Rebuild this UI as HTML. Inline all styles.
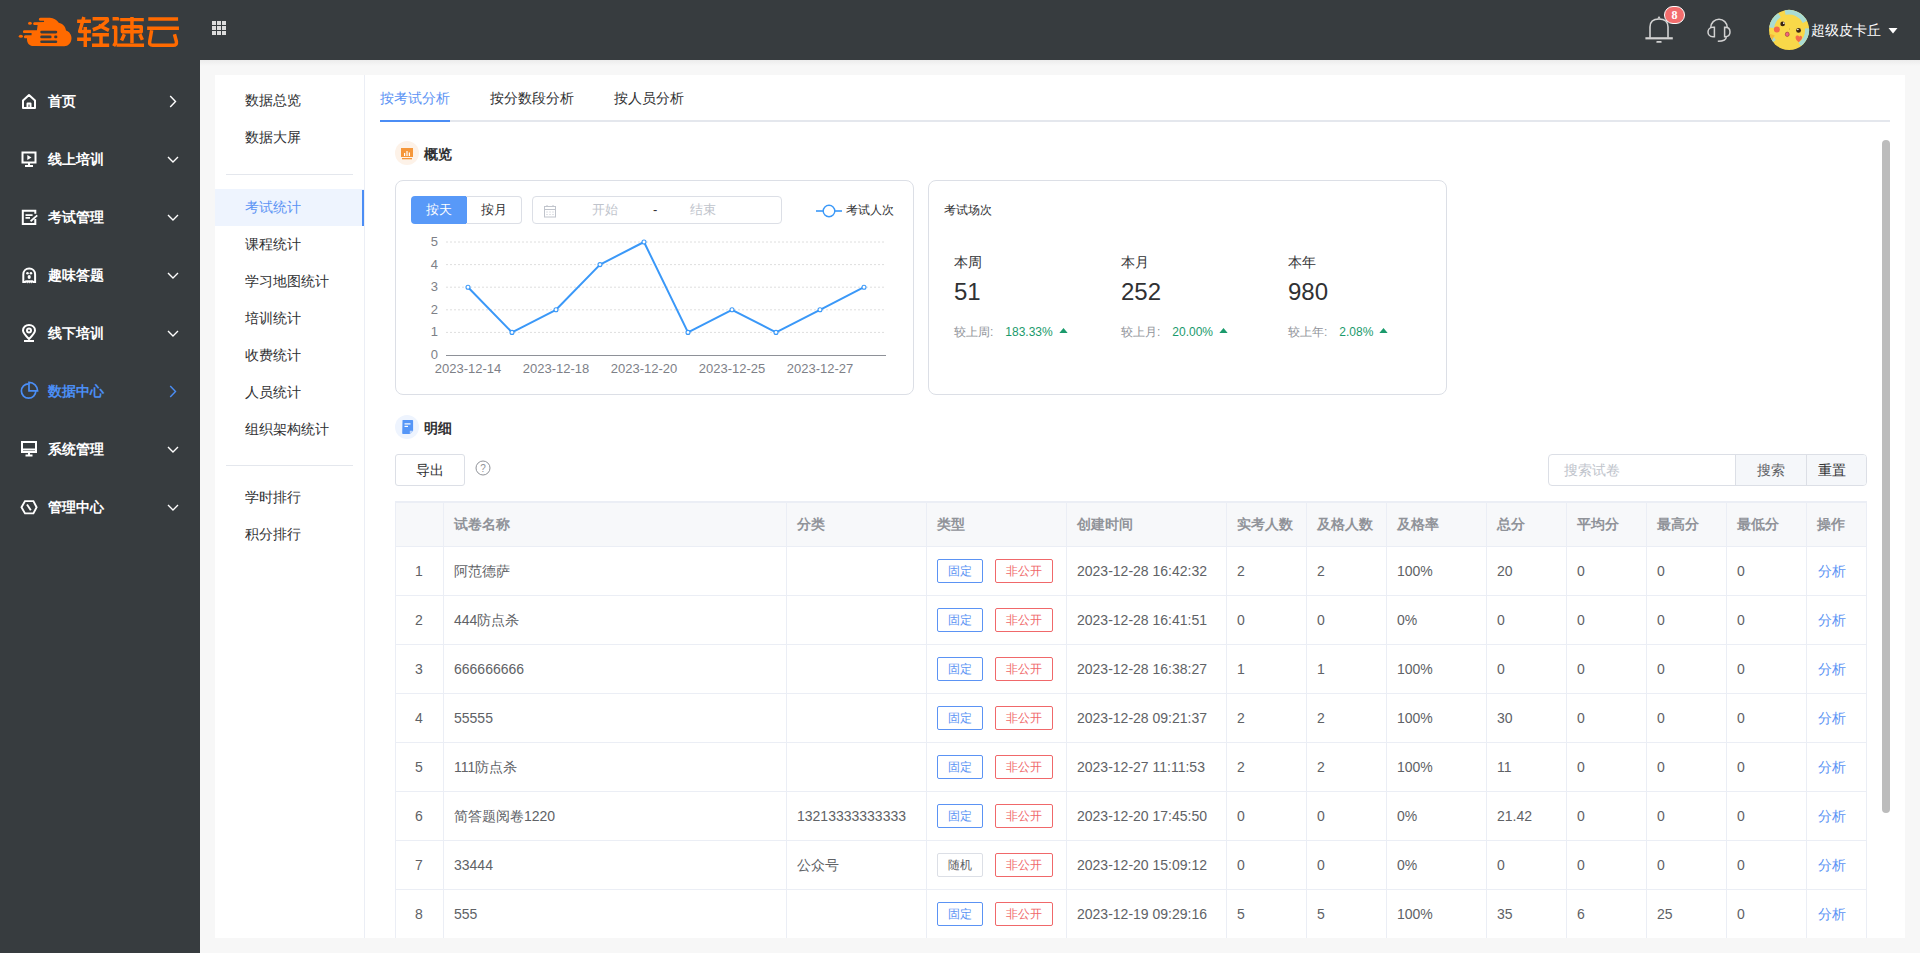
<!DOCTYPE html>
<html><head><meta charset="utf-8">
<style>
*{box-sizing:border-box;margin:0;padding:0}
html,body{width:1920px;height:953px;overflow:hidden;background:#f7f7f7;font-family:"Liberation Sans",sans-serif;font-size:14px;color:#303133}
.a{position:absolute;white-space:nowrap}
#hdr{position:absolute;left:0;top:0;width:1920px;height:60px;background:#373c3f}
#side{position:absolute;left:0;top:60px;width:200px;height:893px;background:#373c3f}
#shadow{position:absolute;left:200px;top:60px;width:1720px;height:6px;background:linear-gradient(#ececec,#f7f7f7)}
.mi{position:absolute;left:0;width:200px;height:30px;color:#fff;font-weight:bold}
.mi .tx{position:absolute;left:48px;top:8px;line-height:14px;font-size:14px}
.mi svg{position:absolute}
#card{position:absolute;left:215px;top:75px;width:1690px;height:863px;background:#fff;overflow:hidden}
#subnav{position:absolute;left:0;top:0;width:150px;height:863px;border-right:1px solid #ebeef5}
.sn{position:absolute;left:0;width:149px;height:37px;line-height:37px;padding-left:30px;color:#303133;font-size:14px}
.sn.act{background:#eef4fe;color:#5b93f4}
.sn.act:after{content:"";position:absolute;right:-2px;top:1px;width:3px;height:36px;background:#4b8df5}
.hr{position:absolute;left:11px;width:127px;height:1px;background:#e6e9ef}

</style></head><body>
<div id="hdr">
 <svg class="a" style="left:14px;top:14px" width="63" height="36" viewBox="0 0 1668 953">
 <path fill="#ff6a00" d="M520 850 C400 850 335 760 345 640 L300 640 C250 640 250 560 300 560 L465 560 L465 505 L275 505 C225 505 225 430 275 430 L608 430 L625 292 L545 292 C495 292 495 218 545 218 L795 212 L795 178 L700 178 C645 178 645 98 700 98 L950 98 C1050 98 1130 160 1185 230 C1290 250 1365 330 1378 440 C1470 470 1528 560 1522 655 C1515 770 1435 852 1330 852 Z"/>
 <ellipse cx="422" cy="246" rx="50" ry="40" fill="#ff6a00"/>
 <ellipse cx="182" cy="592" rx="55" ry="40" fill="#ff6a00"/>
 <g fill="#373c3f">
  <rect x="695" y="445" width="450" height="68" rx="34"/>
  <rect x="695" y="572" width="300" height="68" rx="34"/>
  <rect x="1062" y="572" width="86" height="68" rx="34"/>
  <rect x="695" y="700" width="450" height="70" rx="35"/>
 </g>
</svg>
 <svg class="a" style="left:76px;top:14px" width="108" height="36" viewBox="0 0 1920 640" fill="none" stroke="#ff6a00" stroke-width="62" stroke-linejoin="round">
 <path d="M20 130 L265 130 M140 55 L65 310 L265 310 M165 230 L165 585 M20 450 L265 450"/>
 <path d="M295 85 L555 85 L560 120 L430 230 L300 280 M400 200 L585 290 M290 370 L585 370 M445 370 L445 550 M285 555 L590 555"/>
 <path d="M650 85 L740 85 L740 115 M645 235 L705 235 L705 510 L670 570 M720 550 L1210 555"/>
 <path d="M785 100 L1205 100 M995 55 L995 520 M825 225 L1160 225 L1160 315 L825 315 Z M860 360 L810 470 M1135 360 L1180 460"/>
 <path d="M1285 90 L1815 90 M1265 255 L1830 255 M1345 290 L1310 490 Q1300 555 1360 555 L1730 555 Q1795 555 1785 490 L1750 360"/>
</svg>
 <svg class="a" style="left:212px;top:21px" width="14" height="14" viewBox="0 0 14 14"><g fill="#dcdcdc">
  <rect x="0" y="0" width="4" height="4"/><rect x="5" y="0" width="4" height="4"/><rect x="10" y="0" width="4" height="4"/>
  <rect x="0" y="5" width="4" height="4"/><rect x="5" y="5" width="4" height="4"/><rect x="10" y="5" width="4" height="4"/>
  <rect x="0" y="10" width="4" height="4"/><rect x="5" y="10" width="4" height="4"/><rect x="10" y="10" width="4" height="4"/>
 </g></svg>
 <!-- bell -->
 <svg class="a" style="left:1644px;top:14px" width="30" height="30" viewBox="0 0 30 30" fill="none" stroke="#d2d2d2" stroke-width="1.6">
  <path d="M6 23.8 L6 13 C6 7.5 9.5 5 15 5 C20.5 5 24 7.5 24 13 L24 23.8"/>
  <path d="M1.4 24.3 L28.8 24.3" stroke-width="2.2"/>
  <path d="M13.3 4.6 L15 2 L16.7 4.6Z" fill="#d2d2d2" stroke="none"/>
  <path d="M13.2 27.9 L16.8 27.9" stroke-width="1.8" stroke-linecap="round"/>
 </svg>
 <div class="a" style="left:1664px;top:6px;width:21px;height:18px;border-radius:9px;background:#f26d6d;border:1px solid #fff;color:#fff;font-size:12px;line-height:16px;text-align:center;font-family:'Liberation Serif',serif;font-weight:bold">8</div>
 <!-- headset -->
 <svg class="a" style="left:1705px;top:14px" width="28" height="30" viewBox="0 0 28 30" fill="none" stroke="#d2d2d2" stroke-width="1.5">
  <path d="M5.8 14 L5.8 13.4 A8.2 8.2 0 0 1 22.2 13.4 L22.2 14"/>
  <path d="M9.4 13.3 L9.4 22.7 L8 22.7 C4.3 22.7 3 20 3 18 C3 16 4.3 13.3 8 13.3 Z"/>
  <path d="M19.6 13.3 L19.6 22.7 L20.2 22.7 C23.8 22.7 25 20 25 18 C25 16 23.8 13.3 20.2 13.3 Z"/>
  <path d="M21.3 22.7 C21.3 25.5 19.5 27.2 12.8 27.2"/>
 </svg>
 <!-- avatar -->
 <svg class="a" style="left:1766px;top:8px" width="46" height="44" viewBox="0 0 996 953">
  <defs><clipPath id="avc"><circle cx="500" cy="475" r="435"/></clipPath></defs>
  <g clip-path="url(#avc)">
   <rect width="996" height="953" fill="#f9d849"/>
   <path d="M412 95 A390 390 0 0 1 847 298" stroke="#a9dcd3" stroke-width="110" fill="none"/>
   <path d="M118 428 A385 385 0 0 1 290 152" stroke="#a9dcd3" stroke-width="115" fill="none"/>
   <path d="M891 441 A392 392 0 0 1 730 792" stroke="#a9dcd3" stroke-width="95" fill="none"/>
   <path d="M181 716 A400 400 0 0 1 129 625" stroke="#a9dcd3" stroke-width="80" fill="none"/>
   <path d="M65 560 L190 590 L130 700 Z" fill="#f6b93a"/>
   <circle cx="360" cy="345" r="50" fill="#3a2412"/><circle cx="385" cy="328" r="18" fill="#fff"/>
   <circle cx="705" cy="485" r="52" fill="#3a2412"/><circle cx="690" cy="465" r="18" fill="#fff"/>
   <circle cx="235" cy="465" r="65" fill="#f36b4b"/>
   <path d="M640 640 C640 580 710 590 720 620 C740 580 790 600 780 650 C770 700 720 720 710 740 C680 710 640 690 640 640Z" fill="#f36b4b"/>
   <ellipse cx="460" cy="570" rx="42" ry="48" fill="#f26480" stroke="#8a3a2a" stroke-width="12"/>
   <circle cx="510" cy="455" r="10" fill="#9a7a30"/>
  </g>
 </svg>
 <div class="a" style="left:1811px;top:20px;font-size:14px;line-height:20px;color:#fff">超级皮卡丘</div>
 <svg class="a" style="left:1888px;top:28px" width="10" height="6" viewBox="0 0 10 6"><path d="M0.5 0 L9.5 0 L5 5.5Z" fill="#fff"/></svg>
</div>
<div id="side"></div>
<div id="shadow"></div>
<svg class="a" style="left:21px;top:93px" width="16" height="17" viewBox="0 0 16 17" fill="none" stroke="#fff" stroke-width="2"><path d="M2 15 L2 7.5 L8 2 L14 7.5 L14 15 Z M6.5 15 L6.5 10.5 L9.5 10.5 L9.5 15" stroke-linejoin="round"/></svg>
<div class="a" style="left:48px;top:91px;line-height:20px;font-size:14px;font-weight:bold;color:#fff">首页</div>
<svg class="a" style="left:169px;top:95px" width="8" height="13" viewBox="0 0 8 13" fill="none" stroke="#fff" stroke-width="1.4"><path d="M1.2 1 L6.5 6.5 L1.2 12"/></svg>
<svg class="a" style="left:21px;top:151px" width="16" height="17" viewBox="0 0 16 17" fill="none" stroke="#fff" stroke-width="2"><path d="M1.5 1.5 L14.5 1.5 L14.5 11.5 L1.5 11.5 Z M4 15 L12 15 M8 11.5 L8 15"/><path d="M6.3 4 L10.5 6.5 L6.3 9Z" fill="#fff" stroke="none"/></svg>
<div class="a" style="left:48px;top:149px;line-height:20px;font-size:14px;font-weight:bold;color:#fff">线上培训</div>
<svg class="a" style="left:167px;top:156px" width="12" height="8" viewBox="0 0 12 8" fill="none" stroke="#fff" stroke-width="1.4"><path d="M1 1 L6 6 L11 1"/></svg>
<svg class="a" style="left:21px;top:209px" width="18" height="17" viewBox="0 0 18 17" fill="none" stroke="#fff" stroke-width="2"><path d="M14.3 4.8 L14.3 1.7 L1.8 1.7 L1.8 15 L14.3 15 L14.3 10.1"/><path d="M4.5 6.1 L11.6 6.1 M4.5 8.9 L9 8.9" stroke-width="1.7"/><path d="M9.6 12.2 L16.2 6.4" stroke-width="1.8"/></svg>
<div class="a" style="left:48px;top:207px;line-height:20px;font-size:14px;font-weight:bold;color:#fff">考试管理</div>
<svg class="a" style="left:167px;top:214px" width="12" height="8" viewBox="0 0 12 8" fill="none" stroke="#fff" stroke-width="1.4"><path d="M1 1 L6 6 L11 1"/></svg>
<svg class="a" style="left:21px;top:267px" width="17" height="17" viewBox="0 0 17 17" fill="none" stroke="#fff" stroke-width="2"><path d="M2.3 14.9 L2.3 7.5 C2.3 4 4.8 1.5 8.2 1.5 C11.6 1.5 14.1 4 14.1 7.5 L14.1 14.9 L12.2 14.9 Q11.2 13.6 10.2 14.9 Q9.2 13.6 8.2 14.9 Q7.2 13.6 6.2 14.9 Q5.2 13.6 4.2 14.9 Z"/><circle cx="6.5" cy="6.3" r="1.3" fill="#fff" stroke="none"/><circle cx="9.9" cy="6.3" r="1.3" fill="#fff" stroke="none"/><ellipse cx="8.2" cy="10.1" rx="1.6" ry="2" fill="#fff" stroke="none"/></svg>
<div class="a" style="left:48px;top:265px;line-height:20px;font-size:14px;font-weight:bold;color:#fff">趣味答题</div>
<svg class="a" style="left:167px;top:272px" width="12" height="8" viewBox="0 0 12 8" fill="none" stroke="#fff" stroke-width="1.4"><path d="M1 1 L6 6 L11 1"/></svg>
<svg class="a" style="left:21px;top:324px" width="16" height="18" viewBox="0 0 16 18" fill="none" stroke="#fff" stroke-width="2"><path d="M8 15 C4 11 2 8.5 2 6.5 C2 3.2 4.7 1 8 1 C11.3 1 14 3.2 14 6.5 C14 8.5 12 11 8 15Z"/><circle cx="8" cy="6.5" r="2"/><path d="M3 17 L13 17"/></svg>
<div class="a" style="left:48px;top:323px;line-height:20px;font-size:14px;font-weight:bold;color:#fff">线下培训</div>
<svg class="a" style="left:167px;top:330px" width="12" height="8" viewBox="0 0 12 8" fill="none" stroke="#fff" stroke-width="1.4"><path d="M1 1 L6 6 L11 1"/></svg>
<svg class="a" style="left:18px;top:378px" width="24" height="24" viewBox="0 0 24 24" fill="none" stroke="#4b8ef5" stroke-width="2"><path d="M10.6 5.8 A7.2 7.2 0 1 0 17.8 13" stroke-width="1.7"/><path d="M11 4.3 L11 12.8 L19.6 12.8 A8.6 8.6 0 0 0 11 4.3Z" stroke-width="1.7"/></svg>
<div class="a" style="left:48px;top:381px;line-height:20px;font-size:14px;font-weight:bold;color:#4b8ef5">数据中心</div>
<svg class="a" style="left:169px;top:385px" width="8" height="13" viewBox="0 0 8 13" fill="none" stroke="#4b8ef5" stroke-width="1.4"><path d="M1.2 1 L6.5 6.5 L1.2 12"/></svg>
<svg class="a" style="left:21px;top:441px" width="16" height="16" viewBox="0 0 16 16" fill="none" stroke="#fff" stroke-width="2"><path d="M1 1 L15 1 L15 11 L1 11 Z M1 8.5 L15 8.5 M4.5 14.5 L11.5 14.5 M8 11 L8 14.5"/></svg>
<div class="a" style="left:48px;top:439px;line-height:20px;font-size:14px;font-weight:bold;color:#fff">系统管理</div>
<svg class="a" style="left:167px;top:446px" width="12" height="8" viewBox="0 0 12 8" fill="none" stroke="#fff" stroke-width="1.4"><path d="M1 1 L6 6 L11 1"/></svg>
<svg class="a" style="left:20px;top:499px" width="18" height="17" viewBox="0 0 18 17" fill="none" stroke="#fff" stroke-width="2"><path d="M1.5 8.3 L5 2.1 L13.4 2.1 L16.6 8.3 L13.4 14.4 L5 14.4 Z" stroke-width="1.9"/><path d="M7 5.5 L10.8 11.2" stroke-width="1.9"/></svg>
<div class="a" style="left:48px;top:497px;line-height:20px;font-size:14px;font-weight:bold;color:#fff">管理中心</div>
<svg class="a" style="left:167px;top:504px" width="12" height="8" viewBox="0 0 12 8" fill="none" stroke="#fff" stroke-width="1.4"><path d="M1 1 L6 6 L11 1"/></svg>
<div id="card"></div>
<div class="a" style="left:364px;top:75px;width:1px;height:863px;background:#ebeef5"></div>
<div class="a" style="left:245px;top:90px;line-height:20px;color:#303133">数据总览</div>
<div class="a" style="left:245px;top:127px;line-height:20px;color:#303133">数据大屏</div>
<div class="a" style="left:215px;top:189px;width:149px;height:37px;background:#eef4fe"></div>
<div class="a" style="left:362px;top:190px;width:2px;height:36px;background:#4b8df5"></div>
<div class="a" style="left:245px;top:197px;line-height:20px;color:#5b93f4">考试统计</div>
<div class="a" style="left:245px;top:234px;line-height:20px;color:#303133">课程统计</div>
<div class="a" style="left:245px;top:271px;line-height:20px;color:#303133">学习地图统计</div>
<div class="a" style="left:245px;top:308px;line-height:20px;color:#303133">培训统计</div>
<div class="a" style="left:245px;top:345px;line-height:20px;color:#303133">收费统计</div>
<div class="a" style="left:245px;top:382px;line-height:20px;color:#303133">人员统计</div>
<div class="a" style="left:245px;top:419px;line-height:20px;color:#303133">组织架构统计</div>
<div class="a" style="left:245px;top:487px;line-height:20px;color:#303133">学时排行</div>
<div class="a" style="left:245px;top:524px;line-height:20px;color:#303133">积分排行</div>
<div class="a" style="left:226px;top:174px;width:127px;height:1px;background:#e4e7ed"></div>
<div class="a" style="left:226px;top:465px;width:127px;height:1px;background:#e4e7ed"></div>
<div class="a" style="left:380px;top:120px;width:1510px;height:2px;background:#e4e7ed"></div>
<div class="a" style="left:380px;top:120px;width:70px;height:2px;background:#4b8df5"></div>
<div class="a" style="left:380px;top:88px;line-height:20px;color:#5b93f4">按考试分析</div>
<div class="a" style="left:490px;top:88px;line-height:20px;color:#303133">按分数段分析</div>
<div class="a" style="left:614px;top:88px;line-height:20px;color:#303133">按人员分析</div>
<div class="a" style="left:1882px;top:140px;width:8px;height:673px;border-radius:4px;background:#bcbcbc"></div>
<svg class="a" style="left:395px;top:141px" width="24" height="24" viewBox="0 0 24 24">
<circle cx="12" cy="12" r="12" fill="#fdf2e8"/>
<rect x="6" y="7" width="12" height="9" fill="#f5973a"/>
<rect x="7" y="17" width="10" height="1.3" fill="#f5973a"/>
<rect x="9" y="12" width="1.2" height="3" fill="#fff"/><rect x="11.4" y="10" width="1.2" height="5" fill="#fff"/><rect x="13.8" y="11.5" width="1.2" height="3.5" fill="#fff"/>
</svg>
<div class="a" style="left:424px;top:144px;line-height:20px;font-weight:bold;color:#303133">概览</div>
<div class="a" style="left:395px;top:180px;width:519px;height:215px;border:1px solid #dcdfe6;border-radius:8px"></div>
<div class="a" style="left:411px;top:196px;width:56px;height:28px;background:#5899f8;border-radius:4px 0 0 4px;color:#fff;font-size:13px;line-height:28px;text-align:center">按天</div>
<div class="a" style="left:466px;top:196px;width:56px;height:28px;border:1px solid #dcdfe6;border-left:none;border-radius:0 4px 4px 0;color:#303133;font-size:13px;line-height:26px;text-align:center">按月</div>
<div class="a" style="left:532px;top:196px;width:250px;height:28px;border:1px solid #dcdfe6;border-radius:4px"></div>
<svg class="a" style="left:543px;top:204px" width="14" height="14" viewBox="0 0 14 14" fill="none" stroke="#c0c4cc" stroke-width="1">
<rect x="1.5" y="2.5" width="11" height="10.5"/><path d="M1.5 5.5 L12.5 5.5 M4 1 L4 3 M10 1 L10 3"/>
<path d="M3.5 8 L4.5 8 M6.5 8 L7.5 8 M9.5 8 L10.5 8 M3.5 10.5 L4.5 10.5 M6.5 10.5 L7.5 10.5 M9.5 10.5 L10.5 10.5"/></svg>
<div class="a" style="left:592px;top:200px;line-height:20px;font-size:13px;color:#c0c4cc">开始</div>
<div class="a" style="left:653px;top:200px;line-height:20px;font-size:13px;color:#303133">-</div>
<div class="a" style="left:690px;top:200px;line-height:20px;font-size:13px;color:#c0c4cc">结束</div>
<svg class="a" style="left:815px;top:202.5px" width="28" height="16" viewBox="0 0 28 16"><path d="M1 8 L27 8" stroke="#3a98f8" stroke-width="1.6"/><circle cx="14" cy="8" r="5.8" fill="#fff" stroke="#3a98f8" stroke-width="1.4"/></svg>
<div class="a" style="left:846px;top:200px;line-height:20px;font-size:12px;color:#303133">考试人次</div>
<svg class="a" style="left:0;top:0" width="1920" height="953" viewBox="0 0 1920 953"><path d="M446 332.4 L886 332.4" stroke="#dedede" stroke-width="1" stroke-dasharray="2,2"/><path d="M446 309.8 L886 309.8" stroke="#dedede" stroke-width="1" stroke-dasharray="2,2"/><path d="M446 287.2 L886 287.2" stroke="#dedede" stroke-width="1" stroke-dasharray="2,2"/><path d="M446 264.6 L886 264.6" stroke="#dedede" stroke-width="1" stroke-dasharray="2,2"/><path d="M446 242.0 L886 242.0" stroke="#dedede" stroke-width="1" stroke-dasharray="2,2"/><path d="M446 355.5 L886 355.5" stroke="#8e9198" stroke-width="1"/><polyline points="468.0,287.2 512.0,332.4 556.0,309.8 600.0,264.6 644.0,242.0 688.0,332.4 732.0,309.8 776.0,332.4 820.0,309.8 864.0,287.2" fill="none" stroke="#3a98f8" stroke-width="2" stroke-linejoin="round"/><circle cx="468" cy="287.2" r="2" fill="#fff" stroke="#3a98f8" stroke-width="1.1"/><circle cx="512" cy="332.4" r="2" fill="#fff" stroke="#3a98f8" stroke-width="1.1"/><circle cx="556" cy="309.8" r="2" fill="#fff" stroke="#3a98f8" stroke-width="1.1"/><circle cx="600" cy="264.6" r="2" fill="#fff" stroke="#3a98f8" stroke-width="1.1"/><circle cx="644" cy="242.0" r="2" fill="#fff" stroke="#3a98f8" stroke-width="1.1"/><circle cx="688" cy="332.4" r="2" fill="#fff" stroke="#3a98f8" stroke-width="1.1"/><circle cx="732" cy="309.8" r="2" fill="#fff" stroke="#3a98f8" stroke-width="1.1"/><circle cx="776" cy="332.4" r="2" fill="#fff" stroke="#3a98f8" stroke-width="1.1"/><circle cx="820" cy="309.8" r="2" fill="#fff" stroke="#3a98f8" stroke-width="1.1"/><circle cx="864" cy="287.2" r="2" fill="#fff" stroke="#3a98f8" stroke-width="1.1"/><text x="438" y="359.0" text-anchor="end" font-size="13" fill="#7d8087" font-family="Liberation Sans">0</text><text x="438" y="336.4" text-anchor="end" font-size="13" fill="#7d8087" font-family="Liberation Sans">1</text><text x="438" y="313.8" text-anchor="end" font-size="13" fill="#7d8087" font-family="Liberation Sans">2</text><text x="438" y="291.2" text-anchor="end" font-size="13" fill="#7d8087" font-family="Liberation Sans">3</text><text x="438" y="268.6" text-anchor="end" font-size="13" fill="#7d8087" font-family="Liberation Sans">4</text><text x="438" y="246.0" text-anchor="end" font-size="13" fill="#7d8087" font-family="Liberation Sans">5</text><text x="468" y="373" text-anchor="middle" font-size="13" fill="#7d8087" font-family="Liberation Sans">2023-12-14</text><text x="556" y="373" text-anchor="middle" font-size="13" fill="#7d8087" font-family="Liberation Sans">2023-12-18</text><text x="644" y="373" text-anchor="middle" font-size="13" fill="#7d8087" font-family="Liberation Sans">2023-12-20</text><text x="732" y="373" text-anchor="middle" font-size="13" fill="#7d8087" font-family="Liberation Sans">2023-12-25</text><text x="820" y="373" text-anchor="middle" font-size="13" fill="#7d8087" font-family="Liberation Sans">2023-12-27</text></svg>
<div class="a" style="left:928px;top:180px;width:519px;height:215px;border:1px solid #dcdfe6;border-radius:8px"></div>
<div class="a" style="left:944px;top:200px;line-height:20px;font-size:12px;color:#303133">考试场次</div>
<div class="a" style="left:954px;top:252px;line-height:20px;font-size:14px;color:#303133">本周</div>
<div class="a" style="left:954px;top:278px;line-height:28px;font-size:24px;color:#303133">51</div>
<div class="a" style="left:954px;top:323px;line-height:18px;font-size:12px;color:#909399">较上周:<span style="color:#1a9a6c;margin-left:12px">183.33%</span><svg width="9" height="6" viewBox="0 0 9 6.5" style="margin-left:6px;vertical-align:2px"><path d="M0 5.5 L4.5 0 L9 5.5Z" fill="#1a9a6c"/></svg></div>
<div class="a" style="left:1121px;top:252px;line-height:20px;font-size:14px;color:#303133">本月</div>
<div class="a" style="left:1121px;top:278px;line-height:28px;font-size:24px;color:#303133">252</div>
<div class="a" style="left:1121px;top:323px;line-height:18px;font-size:12px;color:#909399">较上月:<span style="color:#1a9a6c;margin-left:12px">20.00%</span><svg width="9" height="6" viewBox="0 0 9 6.5" style="margin-left:6px;vertical-align:2px"><path d="M0 5.5 L4.5 0 L9 5.5Z" fill="#1a9a6c"/></svg></div>
<div class="a" style="left:1288px;top:252px;line-height:20px;font-size:14px;color:#303133">本年</div>
<div class="a" style="left:1288px;top:278px;line-height:28px;font-size:24px;color:#303133">980</div>
<div class="a" style="left:1288px;top:323px;line-height:18px;font-size:12px;color:#909399">较上年:<span style="color:#1a9a6c;margin-left:12px">2.08%</span><svg width="9" height="6" viewBox="0 0 9 6.5" style="margin-left:6px;vertical-align:2px"><path d="M0 5.5 L4.5 0 L9 5.5Z" fill="#1a9a6c"/></svg></div>
<svg class="a" style="left:395px;top:415px" width="24" height="24" viewBox="0 0 24 24">
<circle cx="12" cy="12" r="12" fill="#eef4fe"/>
<path d="M7.5 5.8 Q7.2 5 8 5 L17.3 5 Q18.1 5 18.1 5.8 L18.1 15.8 L14.8 19 L8 19 Q7.2 19 7.2 18.2 Z" fill="#5596f7"/><path d="M18.1 15.8 L14.8 19 L14.8 15.8 Z" fill="#c3d8fb"/>
<rect x="9.5" y="8.3" width="6" height="1.2" fill="#fff"/><rect x="9.5" y="10.8" width="3.5" height="1.2" fill="#fff"/>
</svg>
<div class="a" style="left:424px;top:418px;line-height:20px;font-weight:bold;color:#303133">明细</div>
<div class="a" style="left:395px;top:454px;width:70px;height:32px;border:1px solid #dcdfe6;border-radius:3px;font-size:14px;line-height:30px;text-align:center;color:#303133">导出</div>
<svg class="a" style="left:475px;top:460px" width="16" height="16" viewBox="0 0 16 16"><circle cx="8" cy="8" r="7" fill="none" stroke="#909399" stroke-width="1"/><text x="8" y="11.5" text-anchor="middle" font-size="10" fill="#909399" font-family="Liberation Sans">?</text></svg>
<div class="a" style="left:1548px;top:454px;width:319px;height:32px;border:1px solid #dcdfe6;border-radius:4px;overflow:hidden"><div class="a" style="left:0;top:0;width:187px;height:30px;line-height:30px;padding-left:15px;color:#c0c4cc">搜索试卷</div><div class="a" style="left:186px;top:0;width:71px;height:30px;border-left:1px solid #dcdfe6;background:#f5f7fa;line-height:30px;text-align:center;color:#606266">搜索</div><div class="a" style="left:257px;top:0;width:62px;height:30px;border-left:1px solid #dcdfe6;background:#f5f7fa;line-height:30px;padding-left:11px;color:#303133">重置</div></div>
<div class="a" style="left:395px;top:501px;width:1472px;height:46px;background:#f7f8fa;border-top:2px solid #ebeef5;border-bottom:1px solid #ebeef5"></div>
<div class="a" style="left:395px;top:595px;width:1472px;height:1px;background:#ebeef5"></div>
<div class="a" style="left:395px;top:644px;width:1472px;height:1px;background:#ebeef5"></div>
<div class="a" style="left:395px;top:693px;width:1472px;height:1px;background:#ebeef5"></div>
<div class="a" style="left:395px;top:742px;width:1472px;height:1px;background:#ebeef5"></div>
<div class="a" style="left:395px;top:791px;width:1472px;height:1px;background:#ebeef5"></div>
<div class="a" style="left:395px;top:840px;width:1472px;height:1px;background:#ebeef5"></div>
<div class="a" style="left:395px;top:889px;width:1472px;height:1px;background:#ebeef5"></div>
<div class="a" style="left:395px;top:938px;width:1472px;height:1px;background:#ebeef5"></div>
<div class="a" style="left:395px;top:501px;width:1px;height:451px;background:#ebeef5"></div>
<div class="a" style="left:443px;top:501px;width:1px;height:451px;background:#ebeef5"></div>
<div class="a" style="left:786px;top:501px;width:1px;height:451px;background:#ebeef5"></div>
<div class="a" style="left:926px;top:501px;width:1px;height:451px;background:#ebeef5"></div>
<div class="a" style="left:1066px;top:501px;width:1px;height:451px;background:#ebeef5"></div>
<div class="a" style="left:1226px;top:501px;width:1px;height:451px;background:#ebeef5"></div>
<div class="a" style="left:1306px;top:501px;width:1px;height:451px;background:#ebeef5"></div>
<div class="a" style="left:1386px;top:501px;width:1px;height:451px;background:#ebeef5"></div>
<div class="a" style="left:1486px;top:501px;width:1px;height:451px;background:#ebeef5"></div>
<div class="a" style="left:1566px;top:501px;width:1px;height:451px;background:#ebeef5"></div>
<div class="a" style="left:1646px;top:501px;width:1px;height:451px;background:#ebeef5"></div>
<div class="a" style="left:1726px;top:501px;width:1px;height:451px;background:#ebeef5"></div>
<div class="a" style="left:1806px;top:501px;width:1px;height:451px;background:#ebeef5"></div>
<div class="a" style="left:1866px;top:501px;width:1px;height:451px;background:#ebeef5"></div>
<div class="a" style="left:454px;top:514px;line-height:20px;font-weight:bold;color:#909399">试卷名称</div>
<div class="a" style="left:797px;top:514px;line-height:20px;font-weight:bold;color:#909399">分类</div>
<div class="a" style="left:937px;top:514px;line-height:20px;font-weight:bold;color:#909399">类型</div>
<div class="a" style="left:1077px;top:514px;line-height:20px;font-weight:bold;color:#909399">创建时间</div>
<div class="a" style="left:1237px;top:514px;line-height:20px;font-weight:bold;color:#909399">实考人数</div>
<div class="a" style="left:1317px;top:514px;line-height:20px;font-weight:bold;color:#909399">及格人数</div>
<div class="a" style="left:1397px;top:514px;line-height:20px;font-weight:bold;color:#909399">及格率</div>
<div class="a" style="left:1497px;top:514px;line-height:20px;font-weight:bold;color:#909399">总分</div>
<div class="a" style="left:1577px;top:514px;line-height:20px;font-weight:bold;color:#909399">平均分</div>
<div class="a" style="left:1657px;top:514px;line-height:20px;font-weight:bold;color:#909399">最高分</div>
<div class="a" style="left:1737px;top:514px;line-height:20px;font-weight:bold;color:#909399">最低分</div>
<div class="a" style="left:1817px;top:514px;line-height:20px;font-weight:bold;color:#909399">操作</div>
<div class="a" style="left:395px;width:48px;text-align:center;top:561px;line-height:20px;color:#606266">1</div>
<div class="a" style="left:454px;top:561px;line-height:20px;color:#606266">阿范德萨</div>
<div class="a" style="left:937px;top:559px;width:46px;height:24px;border:1px solid #5b93f4;border-radius:2px;color:#5b93f4;font-size:12px;line-height:22px;text-align:center">固定</div>
<div class="a" style="left:995px;top:559px;width:58px;height:24px;border:1px solid #f0686a;border-radius:2px;color:#f0686a;font-size:12px;line-height:22px;text-align:center">非公开</div>
<div class="a" style="left:1077px;top:561px;line-height:20px;color:#606266">2023-12-28 16:42:32</div>
<div class="a" style="left:1237px;top:561px;line-height:20px;color:#606266">2</div>
<div class="a" style="left:1317px;top:561px;line-height:20px;color:#606266">2</div>
<div class="a" style="left:1397px;top:561px;line-height:20px;color:#606266">100%</div>
<div class="a" style="left:1497px;top:561px;line-height:20px;color:#606266">20</div>
<div class="a" style="left:1577px;top:561px;line-height:20px;color:#606266">0</div>
<div class="a" style="left:1657px;top:561px;line-height:20px;color:#606266">0</div>
<div class="a" style="left:1737px;top:561px;line-height:20px;color:#606266">0</div>
<div class="a" style="left:1818px;top:561px;line-height:20px;color:#5b93f4">分析</div>
<div class="a" style="left:395px;width:48px;text-align:center;top:610px;line-height:20px;color:#606266">2</div>
<div class="a" style="left:454px;top:610px;line-height:20px;color:#606266">444防点杀</div>
<div class="a" style="left:937px;top:608px;width:46px;height:24px;border:1px solid #5b93f4;border-radius:2px;color:#5b93f4;font-size:12px;line-height:22px;text-align:center">固定</div>
<div class="a" style="left:995px;top:608px;width:58px;height:24px;border:1px solid #f0686a;border-radius:2px;color:#f0686a;font-size:12px;line-height:22px;text-align:center">非公开</div>
<div class="a" style="left:1077px;top:610px;line-height:20px;color:#606266">2023-12-28 16:41:51</div>
<div class="a" style="left:1237px;top:610px;line-height:20px;color:#606266">0</div>
<div class="a" style="left:1317px;top:610px;line-height:20px;color:#606266">0</div>
<div class="a" style="left:1397px;top:610px;line-height:20px;color:#606266">0%</div>
<div class="a" style="left:1497px;top:610px;line-height:20px;color:#606266">0</div>
<div class="a" style="left:1577px;top:610px;line-height:20px;color:#606266">0</div>
<div class="a" style="left:1657px;top:610px;line-height:20px;color:#606266">0</div>
<div class="a" style="left:1737px;top:610px;line-height:20px;color:#606266">0</div>
<div class="a" style="left:1818px;top:610px;line-height:20px;color:#5b93f4">分析</div>
<div class="a" style="left:395px;width:48px;text-align:center;top:659px;line-height:20px;color:#606266">3</div>
<div class="a" style="left:454px;top:659px;line-height:20px;color:#606266">666666666</div>
<div class="a" style="left:937px;top:657px;width:46px;height:24px;border:1px solid #5b93f4;border-radius:2px;color:#5b93f4;font-size:12px;line-height:22px;text-align:center">固定</div>
<div class="a" style="left:995px;top:657px;width:58px;height:24px;border:1px solid #f0686a;border-radius:2px;color:#f0686a;font-size:12px;line-height:22px;text-align:center">非公开</div>
<div class="a" style="left:1077px;top:659px;line-height:20px;color:#606266">2023-12-28 16:38:27</div>
<div class="a" style="left:1237px;top:659px;line-height:20px;color:#606266">1</div>
<div class="a" style="left:1317px;top:659px;line-height:20px;color:#606266">1</div>
<div class="a" style="left:1397px;top:659px;line-height:20px;color:#606266">100%</div>
<div class="a" style="left:1497px;top:659px;line-height:20px;color:#606266">0</div>
<div class="a" style="left:1577px;top:659px;line-height:20px;color:#606266">0</div>
<div class="a" style="left:1657px;top:659px;line-height:20px;color:#606266">0</div>
<div class="a" style="left:1737px;top:659px;line-height:20px;color:#606266">0</div>
<div class="a" style="left:1818px;top:659px;line-height:20px;color:#5b93f4">分析</div>
<div class="a" style="left:395px;width:48px;text-align:center;top:708px;line-height:20px;color:#606266">4</div>
<div class="a" style="left:454px;top:708px;line-height:20px;color:#606266">55555</div>
<div class="a" style="left:937px;top:706px;width:46px;height:24px;border:1px solid #5b93f4;border-radius:2px;color:#5b93f4;font-size:12px;line-height:22px;text-align:center">固定</div>
<div class="a" style="left:995px;top:706px;width:58px;height:24px;border:1px solid #f0686a;border-radius:2px;color:#f0686a;font-size:12px;line-height:22px;text-align:center">非公开</div>
<div class="a" style="left:1077px;top:708px;line-height:20px;color:#606266">2023-12-28 09:21:37</div>
<div class="a" style="left:1237px;top:708px;line-height:20px;color:#606266">2</div>
<div class="a" style="left:1317px;top:708px;line-height:20px;color:#606266">2</div>
<div class="a" style="left:1397px;top:708px;line-height:20px;color:#606266">100%</div>
<div class="a" style="left:1497px;top:708px;line-height:20px;color:#606266">30</div>
<div class="a" style="left:1577px;top:708px;line-height:20px;color:#606266">0</div>
<div class="a" style="left:1657px;top:708px;line-height:20px;color:#606266">0</div>
<div class="a" style="left:1737px;top:708px;line-height:20px;color:#606266">0</div>
<div class="a" style="left:1818px;top:708px;line-height:20px;color:#5b93f4">分析</div>
<div class="a" style="left:395px;width:48px;text-align:center;top:757px;line-height:20px;color:#606266">5</div>
<div class="a" style="left:454px;top:757px;line-height:20px;color:#606266">111防点杀</div>
<div class="a" style="left:937px;top:755px;width:46px;height:24px;border:1px solid #5b93f4;border-radius:2px;color:#5b93f4;font-size:12px;line-height:22px;text-align:center">固定</div>
<div class="a" style="left:995px;top:755px;width:58px;height:24px;border:1px solid #f0686a;border-radius:2px;color:#f0686a;font-size:12px;line-height:22px;text-align:center">非公开</div>
<div class="a" style="left:1077px;top:757px;line-height:20px;color:#606266">2023-12-27 11:11:53</div>
<div class="a" style="left:1237px;top:757px;line-height:20px;color:#606266">2</div>
<div class="a" style="left:1317px;top:757px;line-height:20px;color:#606266">2</div>
<div class="a" style="left:1397px;top:757px;line-height:20px;color:#606266">100%</div>
<div class="a" style="left:1497px;top:757px;line-height:20px;color:#606266">11</div>
<div class="a" style="left:1577px;top:757px;line-height:20px;color:#606266">0</div>
<div class="a" style="left:1657px;top:757px;line-height:20px;color:#606266">0</div>
<div class="a" style="left:1737px;top:757px;line-height:20px;color:#606266">0</div>
<div class="a" style="left:1818px;top:757px;line-height:20px;color:#5b93f4">分析</div>
<div class="a" style="left:395px;width:48px;text-align:center;top:806px;line-height:20px;color:#606266">6</div>
<div class="a" style="left:454px;top:806px;line-height:20px;color:#606266">简答题阅卷1220</div>
<div class="a" style="left:797px;top:806px;line-height:20px;color:#606266">13213333333333</div>
<div class="a" style="left:937px;top:804px;width:46px;height:24px;border:1px solid #5b93f4;border-radius:2px;color:#5b93f4;font-size:12px;line-height:22px;text-align:center">固定</div>
<div class="a" style="left:995px;top:804px;width:58px;height:24px;border:1px solid #f0686a;border-radius:2px;color:#f0686a;font-size:12px;line-height:22px;text-align:center">非公开</div>
<div class="a" style="left:1077px;top:806px;line-height:20px;color:#606266">2023-12-20 17:45:50</div>
<div class="a" style="left:1237px;top:806px;line-height:20px;color:#606266">0</div>
<div class="a" style="left:1317px;top:806px;line-height:20px;color:#606266">0</div>
<div class="a" style="left:1397px;top:806px;line-height:20px;color:#606266">0%</div>
<div class="a" style="left:1497px;top:806px;line-height:20px;color:#606266">21.42</div>
<div class="a" style="left:1577px;top:806px;line-height:20px;color:#606266">0</div>
<div class="a" style="left:1657px;top:806px;line-height:20px;color:#606266">0</div>
<div class="a" style="left:1737px;top:806px;line-height:20px;color:#606266">0</div>
<div class="a" style="left:1818px;top:806px;line-height:20px;color:#5b93f4">分析</div>
<div class="a" style="left:395px;width:48px;text-align:center;top:855px;line-height:20px;color:#606266">7</div>
<div class="a" style="left:454px;top:855px;line-height:20px;color:#606266">33444</div>
<div class="a" style="left:797px;top:855px;line-height:20px;color:#606266">公众号</div>
<div class="a" style="left:937px;top:853px;width:46px;height:24px;border:1px solid #dcdfe6;border-radius:2px;color:#606266;font-size:12px;line-height:22px;text-align:center">随机</div>
<div class="a" style="left:995px;top:853px;width:58px;height:24px;border:1px solid #f0686a;border-radius:2px;color:#f0686a;font-size:12px;line-height:22px;text-align:center">非公开</div>
<div class="a" style="left:1077px;top:855px;line-height:20px;color:#606266">2023-12-20 15:09:12</div>
<div class="a" style="left:1237px;top:855px;line-height:20px;color:#606266">0</div>
<div class="a" style="left:1317px;top:855px;line-height:20px;color:#606266">0</div>
<div class="a" style="left:1397px;top:855px;line-height:20px;color:#606266">0%</div>
<div class="a" style="left:1497px;top:855px;line-height:20px;color:#606266">0</div>
<div class="a" style="left:1577px;top:855px;line-height:20px;color:#606266">0</div>
<div class="a" style="left:1657px;top:855px;line-height:20px;color:#606266">0</div>
<div class="a" style="left:1737px;top:855px;line-height:20px;color:#606266">0</div>
<div class="a" style="left:1818px;top:855px;line-height:20px;color:#5b93f4">分析</div>
<div class="a" style="left:395px;width:48px;text-align:center;top:904px;line-height:20px;color:#606266">8</div>
<div class="a" style="left:454px;top:904px;line-height:20px;color:#606266">555</div>
<div class="a" style="left:937px;top:902px;width:46px;height:24px;border:1px solid #5b93f4;border-radius:2px;color:#5b93f4;font-size:12px;line-height:22px;text-align:center">固定</div>
<div class="a" style="left:995px;top:902px;width:58px;height:24px;border:1px solid #f0686a;border-radius:2px;color:#f0686a;font-size:12px;line-height:22px;text-align:center">非公开</div>
<div class="a" style="left:1077px;top:904px;line-height:20px;color:#606266">2023-12-19 09:29:16</div>
<div class="a" style="left:1237px;top:904px;line-height:20px;color:#606266">5</div>
<div class="a" style="left:1317px;top:904px;line-height:20px;color:#606266">5</div>
<div class="a" style="left:1397px;top:904px;line-height:20px;color:#606266">100%</div>
<div class="a" style="left:1497px;top:904px;line-height:20px;color:#606266">35</div>
<div class="a" style="left:1577px;top:904px;line-height:20px;color:#606266">6</div>
<div class="a" style="left:1657px;top:904px;line-height:20px;color:#606266">25</div>
<div class="a" style="left:1737px;top:904px;line-height:20px;color:#606266">0</div>
<div class="a" style="left:1818px;top:904px;line-height:20px;color:#5b93f4">分析</div>
<div class="a" style="left:200px;top:938px;width:1720px;height:15px;background:#f7f7f7"></div>

</body></html>
